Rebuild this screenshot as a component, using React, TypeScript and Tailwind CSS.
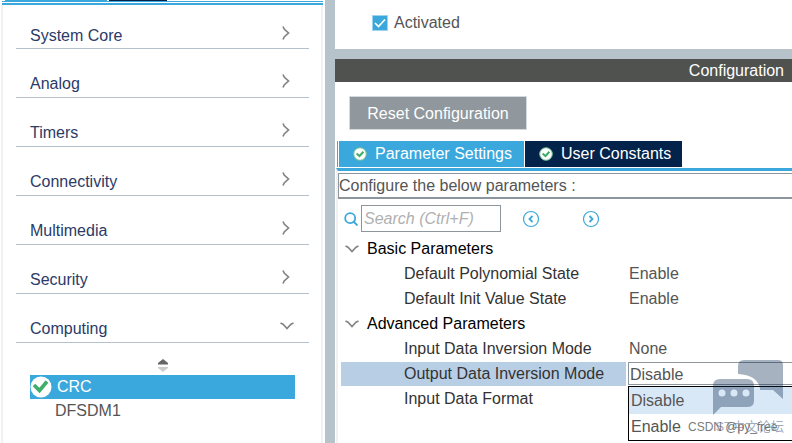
import { Fragment } from "react";

const CATEGORIES = [
  { name: "System Core", open: false },
  { name: "Analog", open: false },
  { name: "Timers", open: false },
  { name: "Connectivity", open: false },
  { name: "Multimedia", open: false },
  { name: "Security", open: false },
  { name: "Computing", open: true },
];

interface Param {
  name: string;
  value: string;
  selected?: boolean;
}

const GROUPS: { title: string; params: Param[] }[] = [
  {
    title: "Basic Parameters",
    params: [
      { name: "Default Polynomial State", value: "Enable" },
      { name: "Default Init Value State", value: "Enable" },
    ],
  },
  {
    title: "Advanced Parameters",
    params: [
      { name: "Input Data Inversion Mode", value: "None" },
      { name: "Output Data Inversion Mode", value: "Disable", selected: true },
      { name: "Input Data Format", value: "" },
    ],
  },
];

function ChevronDown() {
  return (
    <svg width="14" height="8" viewBox="0 0 14 8" fill="none" stroke="#858585" strokeWidth="1.7">
      <path d="M.5 1 3 2.2 7 6.5 11 2.2 13.5 1" />
    </svg>
  );
}

function ChevronRight() {
  return (
    <svg width="8" height="14" viewBox="0 0 8 14" fill="none" stroke="#858585" strokeWidth="1.7">
      <path d="M1 .5 2.2 3 6.5 7 2.2 11 1 13.5" />
    </svg>
  );
}

function CheckBadge() {
  return (
    <svg width="22" height="22" viewBox="0 0 22 22" className="shrink-0">
      <circle cx="11" cy="11" r="10.5" fill="#fff" />
      <path d="M4 9 9.5 14.5 17 5.5" fill="none" stroke="#3fae6a" strokeWidth="3.6" />
    </svg>
  );
}

function TabBadge() {
  return (
    <svg width="14" height="14" viewBox="0 0 14 14" className="shrink-0">
      <circle cx="7" cy="7" r="6.3" fill="#fff" stroke="#6cc08c" />
      <path d="M3.6 6.4 6.5 9 10.4 4.8" fill="none" stroke="#3fae6a" strokeWidth="2" />
    </svg>
  );
}

function StepIcon({ d }: { d: string }) {
  return (
    <svg width="18" height="18" viewBox="0 0 18 18" fill="none" stroke="#3aa8dc">
      <circle cx="9" cy="9" r="7.5" strokeWidth="1.2" />
      <path d={d} strokeWidth="1.8" />
    </svg>
  );
}

function Sidebar() {
  return (
    <aside className="w-[323px] shrink-0 flex flex-col">
      <div className="h-px flex gap-0.5 pl-[5px]">
        <div className="w-[102px] bg-[#3aa8dc]" />
        <div className="w-[58px] bg-[#03234b]" />
      </div>
      <div className="ml-0.5 h-1 border-t border-b-2 border-[#3aa8dc]" />
      <div className="flex-1 ml-px border-x-2 border-[#f1f1f1] pl-[13px] pr-3">
        <nav>
          {CATEGORIES.map((c) => (
            <button
              key={c.name}
              type="button"
              aria-expanded={c.open}
              className="w-full h-[49px] first:h-11 pl-3.5 pt-[22px] first:pt-[18px] flex items-center justify-between border-b border-[#b5c1ca] text-[#2b3a67] text-left"
            >
              {c.name}
              <span className={c.open ? "w-[29px] pb-1.5" : "w-[29px] pl-0.5 pb-1.5"}>
                {c.open ? <ChevronDown /> : <ChevronRight />}
              </span>
            </button>
          ))}
        </nav>
        <div className="px-3.5 pt-4">
          <div className="flex justify-center h-4">
            <svg width="12" height="14" viewBox="0 0 12 14">
              <path d="M1 5.5V4L6 0 11 4V5.5Z" fill="#666" />
              <path d="M1 8V9L6 13 11 9V8Z" fill="#ccc" />
            </svg>
          </div>
          <ul>
            <li className="h-6 flex items-center gap-[5px] bg-[#3aa8dc] text-white">
              <CheckBadge />
              CRC
            </li>
            <li className="h-6 pl-[25px] flex items-center text-[#555]">DFSDM1</li>
          </ul>
        </div>
      </div>
    </aside>
  );
}

function ModeSelect() {
  return (
    <div className="relative">
      <select
        aria-label="Output Data Inversion Mode"
        defaultValue="Disable"
        className="block w-full h-[23px] pl-px appearance-none border border-r-0 border-[#8e969d] bg-white outline-none"
      >
        <option>Disable</option>
        <option>Enable</option>
      </select>
      <ul className="absolute left-0 top-6 w-full h-[55px] border border-r-0 border-black bg-white">
        <li className="h-[27px] pl-0.5 leading-[28px] bg-[#d9e8f6]">Disable</li>
        <li className="h-[26px] pl-0.5 leading-[26px]">Enable</li>
      </ul>
    </div>
  );
}

function ParameterTable() {
  return (
    <table className="w-full table-fixed border-collapse">
      <colgroup>
        <col className="w-[287px]" />
        <col />
      </colgroup>
      <tbody>
        {GROUPS.map((g) => (
          <Fragment key={g.title}>
            <tr className="h-[25px]">
              <th colSpan={2} scope="colgroup" className="p-0 font-normal text-left text-black">
                <span className="flex items-center gap-2 pl-1">
                  <ChevronDown />
                  {g.title}
                </span>
              </th>
            </tr>
            {g.params.map((p) => (
              <tr key={p.name} className="h-[25px] text-[#333]">
                <th scope="row" className="p-0 font-normal text-left">
                  <div className={p.selected ? "pl-[63px] mr-0.5 bg-[#b8cee5]" : "pl-[63px]"}>{p.name}</div>
                </th>
                <td className="p-0 text-[#555]">
                  {p.selected ? <ModeSelect /> : <span className="pl-px">{p.value}</span>}
                </td>
              </tr>
            ))}
          </Fragment>
        ))}
      </tbody>
    </table>
  );
}

function Watermark() {
  return (
    <div className="absolute right-2 bottom-1 w-[100px] h-[79px] pointer-events-none">
      <svg width="72" height="56" viewBox="0 0 72 56" className="absolute right-0 top-0" fill="#03234b" fillOpacity=".35">
        <path d="M32 0h34q5 0 5 5v34L61 30H48V28Q45 15 26 14V6q0-6 6-6Z" />
        <path
          fillRule="evenodd"
          d="M8 19h27q7 0 7 7v15q0 6-7 6H9L1 55V26q0-7 7-7ZM10 29.5a3.5 3.5 0 1 0 0 7 3.5 3.5 0 0 0 0-7Zm12 0a3.5 3.5 0 1 0 0 7 3.5 3.5 0 0 0 0-7Zm12 0a3.5 3.5 0 1 0 0 7 3.5 3.5 0 0 0 0-7Z"
        />
      </svg>
      <span className="absolute right-0 bottom-1 text-[13px] leading-4 whitespace-nowrap text-[#03234b]/40">ST中文论坛</span>
      <span className="absolute left-1 bottom-1 text-xs leading-4 whitespace-nowrap text-[#555]/80">CSDN @py_free</span>
    </div>
  );
}

export default function App() {
  return (
    <div className="relative min-h-screen flex overflow-hidden bg-white text-base leading-6 font-['Liberation_Sans','Noto_Sans_CJK_SC',sans-serif]">
      <Sidebar />
      <div className="w-3 shrink-0 border-l-2 border-white bg-[#b7c3ca]" />
      <main className="flex-1 min-w-0 flex flex-col">
        <section className="h-[49px] pl-[37px] flex items-center bg-white">
          <label className="flex items-center gap-1.5 pb-1 text-[#555]">
            <span className="relative flex">
              <input type="checkbox" defaultChecked className="size-4 appearance-none bg-[#3aa8dc] border border-[#9fd3ee]" />
              <svg width="16" height="16" viewBox="0 0 16 16" className="absolute inset-0 pointer-events-none">
                <path d="M3 8 6.5 11.5 13 4.5" fill="none" stroke="#fff" strokeWidth="1.7" />
              </svg>
            </span>
            Activated
          </label>
        </section>
        <div className="h-2.5 bg-[#b7c3ca]" />
        <h2 className="h-[23px] pr-2 bg-[#505250] text-white text-right">Configuration</h2>
        <div className="pl-3.5 pt-3.5">
          <button type="button" className="block w-[178px] h-[34px] pt-0.5 border border-[#d5dadd] bg-[#90979d] text-white">
            Reset Configuration
          </button>
        </div>
        <div role="tablist" className="mt-[11px] ml-0.5 h-[26px] pl-px flex gap-px border-l border-[#3aa8dc] text-white">
          <button type="button" role="tab" aria-selected="true" className="w-[185px] pl-3.5 flex items-center gap-2 bg-[#3aa8dc]">
            <TabBadge />
            Parameter Settings
          </button>
          <button type="button" role="tab" aria-selected="false" className="w-[157px] pl-3.5 flex items-center gap-2 bg-[#03234b]">
            <TabBadge />
            User Constants
          </button>
        </div>
        <div className="flex-1 ml-px mt-px border-t-[3px] border-t-[#3aa8dc] border-l-2 border-l-[#f1f1f1]">
          <p className="mt-0.5 h-[26px] border border-b-2 border-r-0 border-[#8e969d] text-[#555]">
            Configure the below parameters :
          </p>
          <div className="mt-1.5 h-[27px] pl-1.5 flex items-center">
            <label htmlFor="search" aria-label="Search" className="w-[17px]">
              <svg width="14" height="14" viewBox="0 0 14 14" fill="none" stroke="#3aa8dc" strokeWidth="1.8">
                <circle cx="6.2" cy="6.2" r="5" />
                <path d="M9 9 13.5 13.5" />
              </svg>
            </label>
            <input
              id="search"
              type="text"
              placeholder="Search (Ctrl+F)"
              className="w-[140px] h-[27px] pl-0.5 border border-[#8e969d] italic placeholder:text-[#b0b0b0] outline-none"
            />
            <button type="button" aria-label="Previous match" className="ml-[21px]">
              <StepIcon d="M10.5 6 7.5 9 10.5 12" />
            </button>
            <button type="button" aria-label="Next match" className="ml-[42px]">
              <StepIcon d="M7.5 6 10.5 9 7.5 12" />
            </button>
          </div>
          <div className="mt-1 pl-[3px]">
            <ParameterTable />
          </div>
        </div>
      </main>
      <Watermark />
    </div>
  );
}
